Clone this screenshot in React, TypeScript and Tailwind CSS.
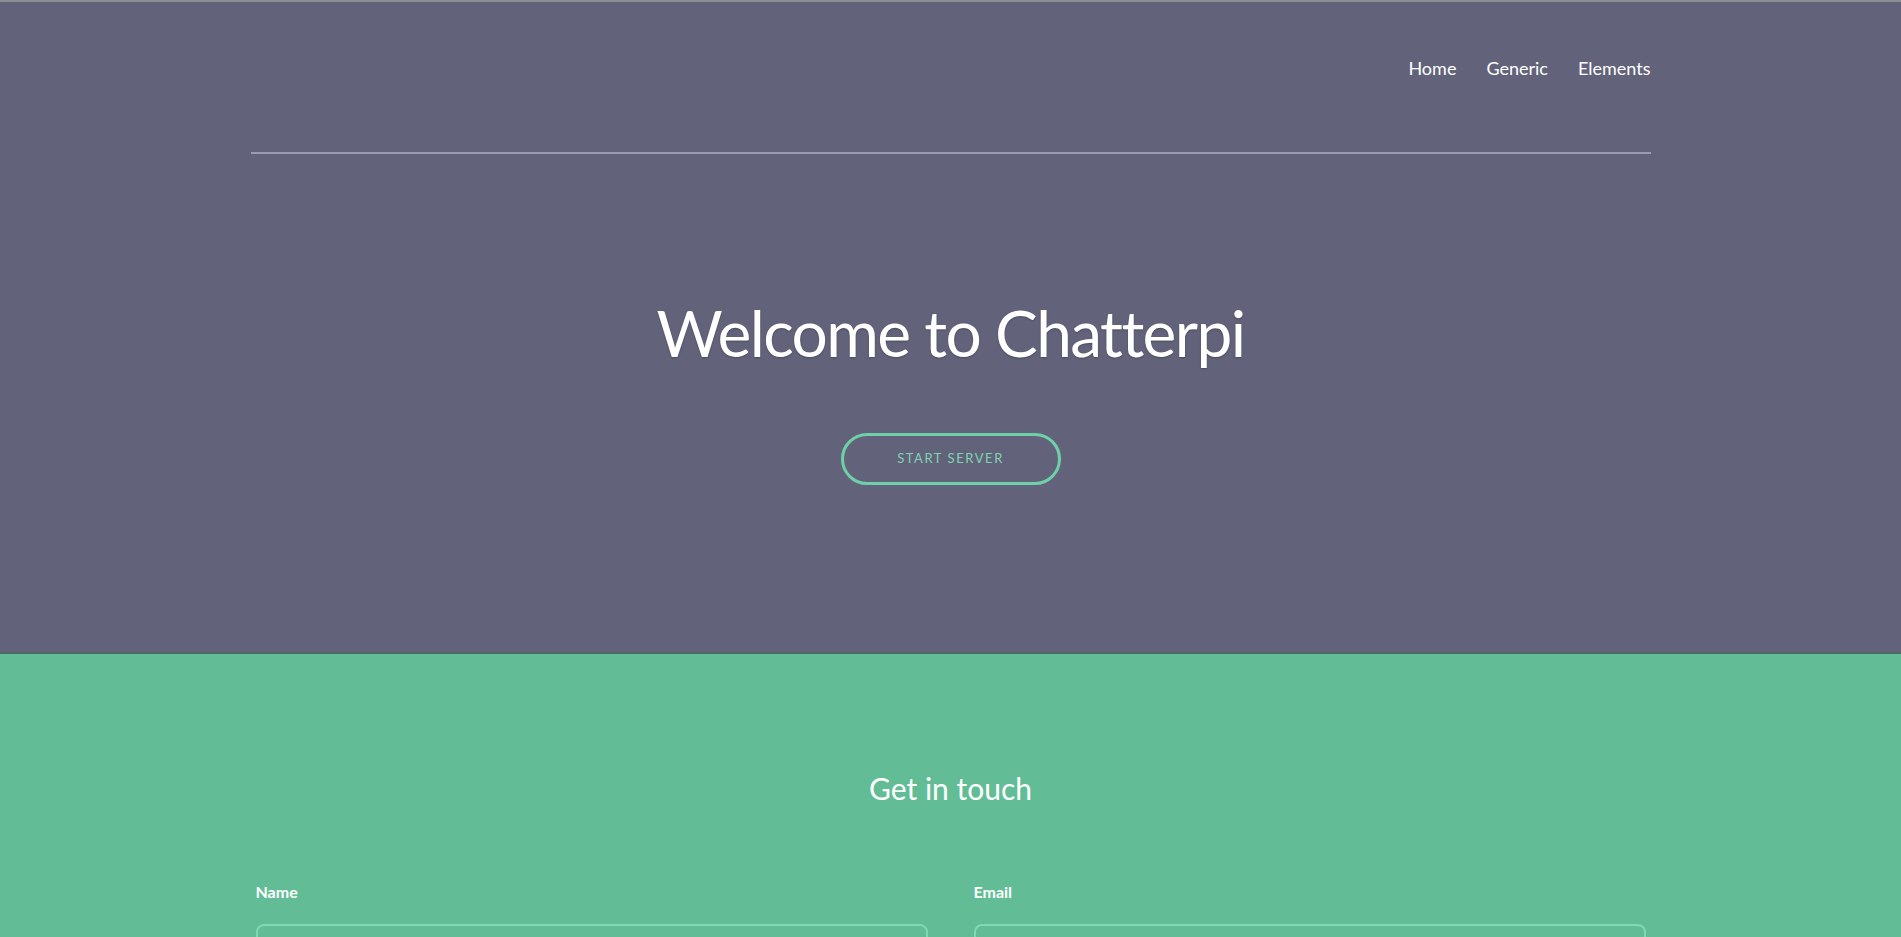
import React from "react";

const navLinks = ["Home", "Generic", "Elements"];

function Header() {
    return (
        <div className="border-t-2 border-[#8d8d94] bg-[#62637a]">
            <div className="mx-auto w-[1400px]">
                <nav className="flex h-[150px] items-start justify-end gap-[30px] pt-[52px] text-[18px] text-white">
                    {navLinks.map((link) => (
                        <a key={link} href="#" className="leading-[28px]">
                            {link}
                        </a>
                    ))}
                </nav>
                <div className="h-[2px] bg-[#9a9bb1]" />
                <div className="flex h-[498px] flex-col items-center pt-[134px]">
                    <h1 className="text-[64px] leading-[90px] tracking-[-1.6px] text-white [text-shadow:0_1px_2px_rgba(0,0,0,0.25)]">
                        Welcome to Chatterpi
                    </h1>
                    <button className="mt-[55px] flex h-[52px] w-[220px] items-center justify-center rounded-full border-[3px] border-[#6fcfa8] text-[13px] tracking-[0.12em] text-[#7fd3b1]">
                        START SERVER
                    </button>
                </div>
            </div>
        </div>
    );
}

function Field({ label }: { label: string }) {
    return (
        <div className="flex flex-col">
            <label className="mb-[22px] text-[16px] font-bold leading-[20px] text-white">
                {label}
            </label>
            <div className="h-[48px] rounded-[8px] border-2 border-[#7fd9b4] bg-[#62bd96]" />
        </div>
    );
}

function Contact() {
    return (
        <div className="border-t-2 border-[#4c6b67] bg-[#62bd96]">
            <div className="mx-auto flex w-[1390px] flex-col pt-[114px]">
                <h2 className="text-center text-[30px] leading-[40px] text-white">
                    Get in touch
                </h2>
                <div className="mt-[74px] grid grid-cols-2 gap-[46px]">
                    <Field label="Name" />
                    <Field label="Email" />
                </div>
            </div>
        </div>
    );
}

export default function App() {
    return (
        <div className="min-h-screen bg-[#62bd96] font-['Lato',sans-serif]">
            <Header />
            <Contact />
        </div>
    );
}
